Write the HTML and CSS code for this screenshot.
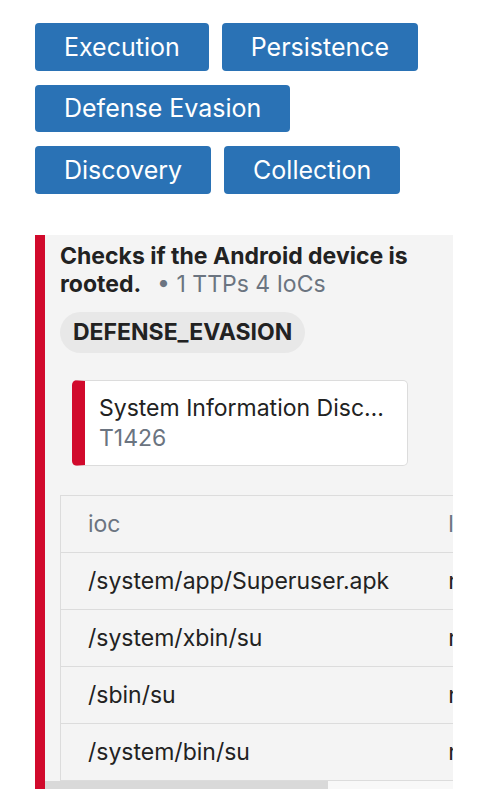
FILE: index.html
```html
<!DOCTYPE html>
<html>
<head>
<meta charset="utf-8">
<link rel="stylesheet" href="styles.css">
</head>
<body>
<div class="tags">
  <span class="tag">Execution</span>
  <span class="tag">Persistence</span>
  <span class="tag">Defense Evasion</span>
  <span class="tag">Discovery</span>
  <span class="tag">Collection</span>
</div>
<div class="card">
  <div class="card-head">
    <div class="title"><b>Checks if the Android device is rooted.</b><span class="meta">• 1 TTPs 4 IoCs</span></div>
    <div class="chip">DEFENSE_EVASION</div>
    <div class="ttp">
      <div class="ttp-name">System Information Discovery</div>
      <div class="ttp-id">T1426</div>
    </div>
  </div>
  <div class="scroll">
    <table class="iocs">
      <thead><tr><th>ioc</th><th>label</th></tr></thead>
      <tbody>
        <tr><td>/system/app/Superuser.apk</td><td>name</td></tr>
        <tr><td>/system/xbin/su</td><td>name</td></tr>
        <tr><td>/sbin/su</td><td>name</td></tr>
        <tr><td>/system/bin/su</td><td>name</td></tr>
      </tbody>
    </table>
  </div>
  <div class="scrollbar"><div class="thumb"></div></div>
</div>
</body>
</html>
```
FILE: styles.css
```css
html, body { margin: 0; padding: 0; background: #fff; }
body {
  font-family: Inter, "Noto Sans", sans-serif;
  color: #222;
  padding: 23px 0 0 35px;
}
.tags {
  display: flex;
  flex-wrap: wrap;
  gap: 14px 13px;
  width: 400px;
}
.tag {
  background: #2a72b5;
  color: #fff;
  font-size: 25px;
  line-height: 29.5px;
  padding: 9.5px 29px 8.5px;
  border-radius: 4px;
}
.card {
  margin-top: 41px;
  width: 408px;
  border-left: 10px solid #d10a2c;
  background: #f4f4f4;
  overflow: hidden;
}
.card-head { padding: 7px 15px 0 15px; }
.title {
  font-size: 23px;
  line-height: 28px;
  color: #222;
}
.title b { font-weight: 700; }
.meta {
  color: #6b7480;
  margin-left: 16px;
}
.chip {
  display: inline-block;
  margin-top: 14px;
  background: #e8e8e8;
  border-radius: 21px;
  padding: 0 13px;
  height: 41px;
  line-height: 41px;
  font-size: 23px;
  font-weight: 700;
}
.ttp {
  margin: 27px 0 0 12px;
  width: 294px;
  background: #fff;
  border: 1px solid #dcdcdc;
  border-left: 13px solid #d10a2c;
  border-radius: 5px;
  padding: 12px 14px;
  font-size: 23px;
  line-height: 30px;
}
.ttp-name {
  white-space: nowrap;
  overflow: hidden;
  text-overflow: ellipsis;
}
.ttp-id { color: #6b7480; }
.scroll {
  margin-top: 29px;
  overflow: hidden;
  padding-left: 15px;
}
.iocs {
  border-collapse: collapse;
  width: 570px;
  font-size: 23px;
}
.iocs th, .iocs td {
  text-align: left;
  height: 56px;
  padding: 0 28px 0 27px;
  border-top: 1px solid #dcdcdc;
  border-bottom: 1px solid #dcdcdc;
  white-space: nowrap;
}
.iocs th:first-child, .iocs td:first-child {
  border-left: 1px solid #dcdcdc;
  width: 1px;
  padding-right: 32px;
}
.iocs th { font-weight: 400; color: #6b7480; }
.scrollbar {
  height: 8px;
  background: #f8f8f8;
}
.thumb {
  width: 283px;
  height: 100%;
  background: #d9d9d9;
}
```
